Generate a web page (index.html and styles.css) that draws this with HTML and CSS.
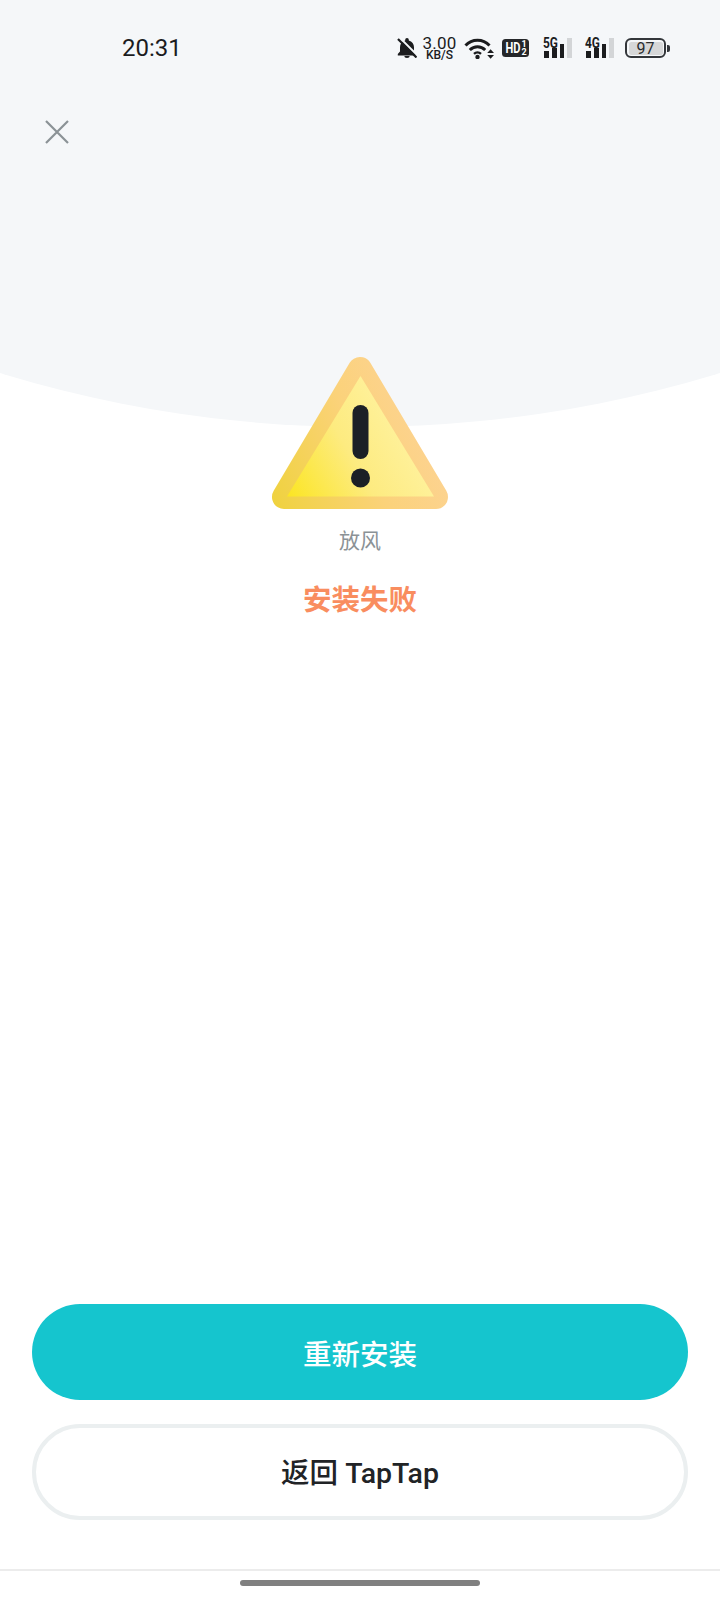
FILE: index.html
```html
<!DOCTYPE html>
<html lang="zh-CN">
	<head>
		<meta charset="UTF-8" />
		<meta name="viewport" content="width=device-width, initial-scale=1.0" />
		<title>安装失败</title>
		<link rel="stylesheet" href="styles.css">
	</head>
	<body>
		<div class="page">
			<div class="backdrop"></div>

			<div class="statusbar">
				<span class="time">20:31</span>
				<div class="icons">
					<svg class="bell" width="20" height="20" viewBox="0 0 20 20">
						<path d="M10 0a1.800 1.800 0 0 1 1.800 1.800v.7c3.300 .8 5.200 3.500 5.200 6.800v4.200l2.200 2.600v1.400H.800v-1.400L3 13.500V9.300c0-3.300 1.900-6 5.200-6.800v-.7A1.800 1.800 0 0 1 10 0z" fill="#1b1c1e"/>
						<path d="M7.300 18h5.400a2.700 2 0 0 1-5.400 0z" fill="#1b1c1e"/>
						<path d="M2.500 -.5L21 18" stroke="#f5f7f9" stroke-width="2"/>
						<path d="M1 1L19.500 19.500" stroke="#1b1c1e" stroke-width="2.200"/>
					</svg>
					<div class="speed">
						<span class="speed-num">3.00</span>
						<span class="speed-unit">KB/S</span>
					</div>
					<svg class="wifi" width="30" height="21" viewBox="0 0 30 21" fill="none">
						<path d="M1.500 7.500C8 .6 19 .6 25.500 7.500" stroke="#1b1c1e" stroke-width="3"/>
						<path d="M5.800 12c4.400-4.400 11-4.400 15.400 0" stroke="#1b1c1e" stroke-width="3"/>
						<path d="M10 15.800c2-1.800 5-1.800 7 0" stroke="#1b1c1e" stroke-width="2.400"/>
						<circle cx="13.500" cy="19" r="2.200" fill="#1b1c1e"/>
						<path d="M22 9h8v12h-8z" fill="#f5f7f9"/>
						<path d="M23.200 15l3.400-3.800 3.400 3.800zM23.200 17l3.400 3.800 3.400-3.800z" fill="#1b1c1e"/>
					</svg>
					<svg class="hd" width="27" height="18" viewBox="0 0 27 18">
						<rect width="27" height="18" rx="3.500" fill="#25272a"/>
						<text class="hd-text" x="3.500" y="14" textLength="15" lengthAdjust="spacingAndGlyphs">HD</text>
						<text class="hd-frac" x="22" y="7.500">1</text>
						<text class="hd-frac" x="22" y="15.500">2</text>
					</svg>
					<div class="signal">
						<span class="net">5G</span>
						<div class="bars">
							<i class="bar b1"></i>
							<i class="bar b2"></i>
							<i class="bar b3"></i>
							<i class="bar b4 off"></i>
						</div>
					</div>
					<div class="signal">
						<span class="net">4G</span>
						<div class="bars">
							<i class="bar b1"></i>
							<i class="bar b2"></i>
							<i class="bar b3"></i>
							<i class="bar b4 off"></i>
						</div>
					</div>
					<div class="battery">
						<div class="cell"><span>97</span></div>
						<i class="nub"></i>
					</div>
				</div>
			</div>

			<svg class="close" width="24" height="24" viewBox="0 0 24 24">
				<path d="M1 1L23 23M23 1L1 23" stroke="#8b9296" stroke-width="2.200" fill="none"/>
			</svg>

			<div class="result">
				<svg class="warn" width="180" height="156" viewBox="270 355 180 156">
					<defs>
						<linearGradient id="warnOuter" gradientUnits="userSpaceOnUse" x1="272" y1="509" x2="448" y2="430">
							<stop offset="0" stop-color="#efd23c"/>
							<stop offset="0.55" stop-color="#fbd27a"/>
							<stop offset="1" stop-color="#fdd397"/>
						</linearGradient>
						<linearGradient id="warnInner" gradientUnits="userSpaceOnUse" x1="285" y1="497" x2="420" y2="420">
							<stop offset="0" stop-color="#fbe520"/>
							<stop offset="0.5" stop-color="#fdeb80"/>
							<stop offset="1" stop-color="#fff3a4"/>
						</linearGradient>
					</defs>
					<polygon points="360,369 284,497 436,497" fill="url(#warnOuter)" stroke="url(#warnOuter)" stroke-width="24" stroke-linejoin="round"/>
					<polygon points="360.500,376 287,496.500 434,496.500" fill="url(#warnInner)"/>
					<rect x="352.500" y="405" width="16" height="54" rx="8" fill="#1c2026"/>
					<circle cx="360.500" cy="478" r="9.500" fill="#1c2026"/>
				</svg>
				<p class="appname">放风</p>
				<h1 class="title">安装失败</h1>
			</div>

			<div class="actions">
				<button class="btn primary">重新安装</button>
				<button class="btn outline">返回 TapTap</button>
			</div>

			<div class="navbar">
				<div class="homebar"></div>
			</div>
		</div>
	</body>
</html>
```

FILE: styles.css
```css
* {
	margin: 0;
	padding: 0;
	box-sizing: border-box;
}
body {
	background-color: #fff;
	font-family: Roboto, "Noto Sans CJK SC", sans-serif;
}
.page {
	position: relative;
	display: flex;
	flex-direction: column;
	width: 720px;
	height: 1600px;
	overflow: hidden;
}
.backdrop {
	position: absolute;
	left: -867px;
	bottom: 1173px;
	width: 2454px;
	height: 2454px;
	border-radius: 50%;
	background-color: #f5f7f9;
}
.statusbar {
	position: relative;
	display: flex;
	justify-content: space-between;
	align-items: center;
	height: 96px;
	padding-left: 122px;
	padding-right: 50px;
	color: #1b1c1e;
}
.time {
	font-size: 24px;
	font-weight: 450;
}
.icons {
	display: flex;
	align-items: center;
}
.bell {
	margin-right: 6px;
}
.speed {
	display: flex;
	flex-direction: column;
	align-items: center;
	width: 33px;
	margin-right: 8px;
}
.speed-num {
	font-size: 17px;
	font-weight: 450;
	line-height: 14px;
	letter-spacing: 0.2px;
}
.speed-unit {
	font-size: 12px;
	font-weight: 500;
	line-height: 11px;
}
.wifi {
	margin-right: 8px;
}
.hd {
	margin-right: 1px;
}
.hd-text {
	font-family: Roboto, sans-serif;
	font-size: 14px;
	font-weight: 700;
	fill: #fff;
}
.hd-frac {
	font-family: Roboto, sans-serif;
	font-size: 9px;
	font-weight: 700;
	text-anchor: middle;
	fill: #fff;
}
.signal {
	position: relative;
	width: 28px;
	height: 20px;
	margin-left: 14px;
}
.net {
	position: absolute;
	left: -1px;
	top: -2px;
	font-size: 14px;
	font-weight: 700;
	line-height: 14px;
	transform: scaleX(0.85);
	transform-origin: left;
}
.bars {
	display: flex;
	align-items: flex-end;
	gap: 3px;
	height: 20px;
}
.bar {
	display: block;
	width: 5px;
	background-color: #1b1c1e;
}
.bar.b1 {
	height: 7px;
}
.bar.b2 {
	height: 10px;
}
.bar.b3 {
	height: 14px;
}
.bar.b4 {
	height: 20px;
}
.bar.off {
	background-color: #d3d5d7;
}
.battery {
	display: flex;
	align-items: center;
	margin-left: 11px;
}
.cell {
	display: flex;
	align-items: center;
	justify-content: center;
	width: 41px;
	height: 20px;
	border: 2px solid #33363a;
	border-radius: 6px;
	background-color: #d6d7d8;
	background-clip: content-box;
	padding: 1.500px;
	font-size: 16px;
	color: #2a2c2f;
}
.nub {
	display: block;
	width: 3px;
	height: 7px;
	margin-left: 1px;
	border-radius: 0 2px 2px 0;
	background-color: #33363a;
}
.close {
	position: relative;
	display: block;
	margin-top: 24px;
	margin-left: 45px;
}
.result {
	position: relative;
	display: flex;
	flex-direction: column;
	align-items: center;
}
.warn {
	display: block;
	margin-top: 211px;
}
.appname {
	margin-top: 14px;
	font-size: 21px;
	line-height: 32px;
	color: #8b9296;
}
.title {
	margin-top: 24px;
	font-size: 28.500px;
	font-weight: 700;
	line-height: 40px;
	color: #f98d5f;
}
.actions {
	display: flex;
	flex-direction: column;
	gap: 24px;
	margin-top: auto;
	padding: 0 32px;
}
.btn {
	height: 96px;
	border-radius: 48px;
	font-family: inherit;
	font-size: 28.500px;
	font-weight: 500;
}
.primary {
	border: none;
	background-color: #15c5ce;
	color: #fff;
}
.outline {
	border: 4px solid #ebeff0;
	padding-bottom: 3px;
	background-color: #fff;
	color: #212326;
}
.navbar {
	display: flex;
	justify-content: center;
	height: 31px;
	margin-top: 49px;
	border-top: 2px solid #ececec;
	padding-top: 9px;
}
.homebar {
	width: 240px;
	height: 6px;
	border-radius: 3px;
	background-color: #808080;
}
```
